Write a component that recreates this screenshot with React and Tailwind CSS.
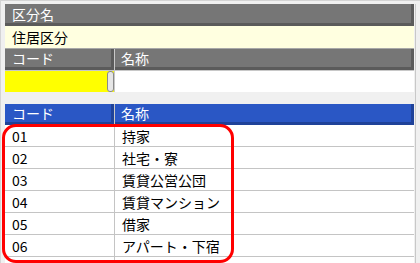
import React from "react";

const rows = [
  ["01", "持家"],
  ["02", "社宅・寮"],
  ["03", "賃貸公営公団"],
  ["04", "賃貸マンション"],
  ["05", "借家"],
  ["06", "アパート・下宿"],
  ["", ""],
];

export default function App() {
  return (
    <div
      className="relative w-[420px] h-[263px] overflow-hidden bg-[#f0f0f0] border-l border-t border-[#d4d4d4] pl-[4px] pt-[3px] text-[14px] leading-none"
      style={{ fontFamily: '"Noto Sans CJK JP", "Noto Sans", sans-serif' }}
    >
      <div className="w-[411px] h-[262px] overflow-hidden border-r border-[#c8c8c8] pr-px flex flex-col">
        {/* top section */}
        <div className="shrink-0 h-[22px] bg-[#767676] border-b-[3px] border-r-[3px] border-[#5b5b5b] text-white flex items-center pl-[7px]">
          区分名
        </div>
        <div className="shrink-0 h-[22px] bg-[#ffffe0] text-black flex items-center pl-[7px]">住居区分</div>
        <div className="shrink-0 h-px bg-[#a8a8a8]" />
        <div className="shrink-0 h-[21px] flex">
          <div className="w-[109px] bg-[#767676] border-b-[3px] border-r-[3px] border-[#5b5b5b] text-white flex items-center pl-[7px]">
            コード
          </div>
          <div className="w-px bg-[#c8c8c8]" />
          <div className="flex-1 bg-[#767676] border-b-[3px] border-r-[3px] border-[#5b5b5b] text-white flex items-center pl-[6px]">
            名称
          </div>
        </div>
        <div className="shrink-0 h-px bg-[#c8c8c8]" />
        <div className="shrink-0 h-[21px] flex">
          <div className="w-[102px] bg-[#ffff00]" />
          <div className="w-[7px] bg-[#ffff00] flex">
            <div className="w-[7px] h-[21px] bg-[#e6e6e6] border border-[#8a8a8a] rounded-[3px]" />
          </div>
          <div className="w-px bg-[#c8c8c8]" />
          <div className="flex-1 bg-white" />
        </div>

        {/* bottom table */}
        <div className="shrink-0 mt-[12px] h-[21px] flex">
          <div className="w-[109px] bg-[#2a57c5] border-b-[3px] border-r-[3px] border-[#1f4299] text-white flex items-center pl-[7px]">
            コード
          </div>
          <div className="w-px bg-[#c8c8c8]" />
          <div className="flex-1 bg-[#2a57c5] border-b-[3px] border-r-[3px] border-[#1f4299] text-white flex items-center pl-[6px]">
            名称
          </div>
        </div>
        <div className="shrink-0 flex flex-col bg-white">
          {rows.map(([c, n], i) => (
            <div key={i} className="shrink-0 h-[22px] flex border-b border-[#c4c4c4] text-black">
              <div className="w-[109px] flex items-center pl-[7px]">{c}</div>
              <div className="w-px bg-[#c4c4c4]" />
              <div className="flex-1 flex items-center pl-[7px]">{n}</div>
            </div>
          ))}
        </div>
      </div>

      {/* red highlight */}
      <div className="absolute left-[1px] top-[123px] w-[232px] h-[139px] border-[3px] border-[#ff0000] rounded-[14px]" />
    </div>
  );
}
